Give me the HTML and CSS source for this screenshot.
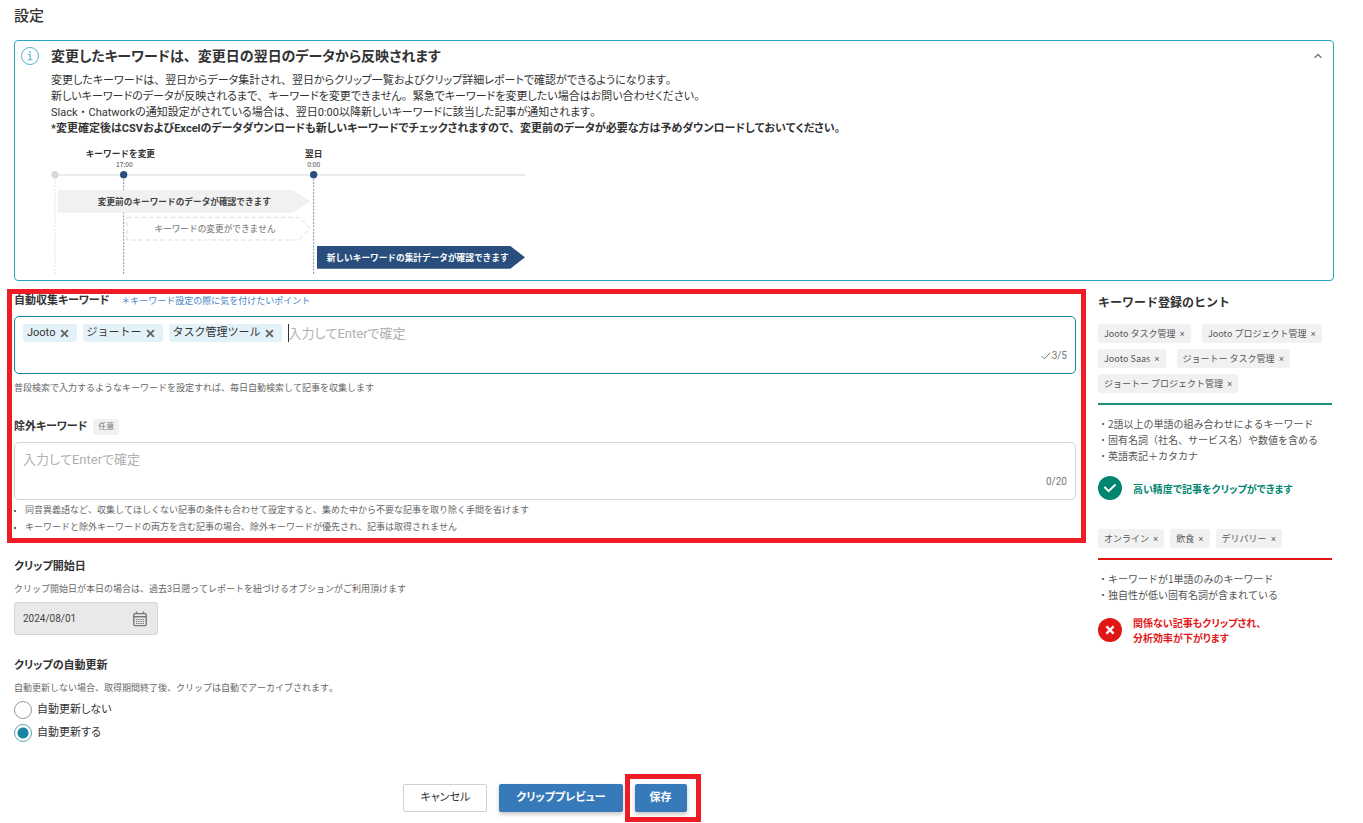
FILE: index.html
```
<!DOCTYPE html>
<html lang="ja">
<head>
    <meta charset="UTF-8">
    <meta name="viewport" content="width=device-width, initial-scale=1.0">
    <title>設定</title>
    <link rel="stylesheet" href="styles.css">
</head>
<body>
    <h1 class="page-title">設定</h1>

    <section class="notice">
        <svg class="notice-icon" viewBox="0 0 18 18" fill="none" stroke="#4db3cd">
            <circle cx="9" cy="9" r="8.5"/>
            <path d="M7 7.5h2.2v5M6.8 12.8h4.6" stroke-width="1.1"/>
            <circle cx="9" cy="5.2" r=".9" fill="#4db3cd" stroke="none"/>
        </svg>
        <div class="notice-body">
            <h2>変更したキーワードは<span class="full">、</span>変更日の翌日のデータから反映されます</h2>
            <p>変更したキーワードは<span class="full">、</span>翌日からデータ集計され<span class="full">、</span>翌日からクリップ一覧およびクリップ詳細レポートで確認ができるようになります<span class="full">。</span></p>
            <p>新しいキーワードのデータが反映されるまで<span class="full">、</span>キーワードを変更できません<span class="full">。</span>緊急でキーワードを変更したい場合はお問い合わせください<span class="full">。</span></p>
            <p>Slack<span class="full">・</span>Chatworkの通知設定がされている場合は<span class="full">、</span>翌日0:00以降新しいキーワードに該当した記事が通知されます<span class="full">。</span></p>
            <p><strong>*変更確定後はCSVおよびExcelのデータダウンロードも新しいキーワードでチェックされますので<span class="full">、</span>変更前のデータが必要な方は予めダウンロードしておいてください<span class="full">。</span></strong></p>
            <svg class="timeline" viewBox="16 0 714 201">
                <path d="M22 52.5H727" stroke="#e4e4e4" stroke-width="2"/>
                <path d="M22 58V201" stroke="#e2e2e2" stroke-width="1.5" stroke-dasharray="3 2"/>
                <path d="M125 58V201M410 58V201" stroke="#7d92b3" stroke-width="1.5" stroke-dasharray="3 2"/>
                <circle cx="22" cy="52" r="5.5" fill="#d9d9d9"/>
                <circle cx="125" cy="52" r="5.5" fill="#294d7c"/>
                <circle cx="410" cy="52" r="5.5" fill="#294d7c"/>
                <path d="M26 75H379L405 92L379 109H26Z" fill="#f1f1f1"/>
                <path d="M130 116H388L404 133L388 150H130Z" fill="#fff" stroke="#dcdcdc" stroke-width="1.5" stroke-dasharray="7 4"/>
                <path d="M415 159H705L727 176L705 193H415Z" fill="#294d7c"/>
                <g font-size="13" font-weight="bold" text-anchor="middle">
                    <text x="120" y="25" fill="#333">キーワードを変更</text>
                    <text x="410" y="25" fill="#333">翌日</text>
                    <text x="216" y="97" fill="#444">変更前のキーワードのデータが確認できます</text>
                    <text x="262" y="138" fill="#888" font-weight="500">キーワードの変更ができません</text>
                    <text x="566" y="181" fill="#fff">新しいキーワードの集計データが確認できます</text>
                </g>
                <g font-size="10" text-anchor="middle" fill="#444">
                    <text x="126" y="40">17:00</text>
                    <text x="410" y="40">0:00</text>
                </g>
            </svg>
        </div>
        <button type="button" class="notice-toggle" aria-label="閉じる">
            <svg viewBox="0 0 8 6" fill="none" stroke="#777" stroke-width="1.4"><path d="M.6 4.8L4 1.4L7.4 4.8"/></svg>
        </button>
    </section>

    <div class="columns">
        <form class="settings">
            <div class="keywords">
                <div class="field">
                    <div class="field-title">
                        <label for="keyword">自動収集キーワード</label>
                        <a href="#">＊キーワード設定の際に気を付けたいポイント</a>
                    </div>
                    <div class="tag-box active">
                        <div class="tags">
                            <span class="tag">Jooto<button type="button" aria-label="削除"><svg viewBox="0 0 8 8"><path d="M1 1l6 6M7 1l-6 6"/></svg></button></span>
                            <span class="tag">ジョートー<button type="button" aria-label="削除"><svg viewBox="0 0 8 8"><path d="M1 1l6 6M7 1l-6 6"/></svg></button></span>
                            <span class="tag">タスク管理ツール<button type="button" aria-label="削除"><svg viewBox="0 0 8 8"><path d="M1 1l6 6M7 1l-6 6"/></svg></button></span>
                            <input type="text" id="keyword" placeholder="入力してEnterで確定">
                        </div>
                        <div class="counter"><svg viewBox="0 0 10 8" fill="none" stroke="#777"><path d="M.8 4.2L3.4 6.8L9.2 .8"/></svg>3/5</div>
                    </div>
                    <p class="help">普段検索で入力するようなキーワードを設定すれば、毎日自動検索して記事を収集します</p>
                </div>
                <div class="field">
                    <div class="field-title">
                        <label for="exclude">除外キーワード</label>
                        <span class="optional">任意</span>
                    </div>
                    <div class="tag-box">
                        <div class="tags">
                            <input type="text" id="exclude" placeholder="入力してEnterで確定">
                        </div>
                        <div class="counter">0/20</div>
                    </div>
                    <ul class="help-list">
                        <li>同音異義語など、収集してほしくない記事の条件も合わせて設定すると、集めた中から不要な記事を取り除く手間を省けます</li>
                        <li>キーワードと除外キーワードの両方を含む記事の場合、除外キーワードが優先され、記事は取得されません</li>
                    </ul>
                </div>
                <div class="marker marker-keywords"></div>
            </div>

            <div class="field">
                <div class="field-title"><label for="start">クリップ開始日</label></div>
                <p class="help">クリップ開始日が本日の場合は、過去3日遡ってレポートを紐づけるオプションがご利用頂けます</p>
                <div class="date-box">
                    <input type="text" id="start" value="2024/08/01" disabled>
                    <svg viewBox="0 0 14 16" fill="none" stroke="#777">
                        <rect x=".8" y="2.6" width="12.4" height="12" rx="1" stroke-width="1.4"/>
                        <path d="M.8 5.8h12.4M3.5 .5v2M10.5 .5v2" stroke-width="1.4"/>
                        <path d="M3 8.5h8M3 10.5h8M3 12.5h8" stroke-width="1.2" stroke-dasharray="1.4 .8"/>
                    </svg>
                </div>
            </div>

            <div class="field">
                <div class="field-title">クリップの自動更新</div>
                <p class="help">自動更新しない場合、取得期間終了後、クリップは自動でアーカイブされます。</p>
                <div class="radios">
                    <label><input type="radio" name="renew">自動更新しない</label>
                    <label><input type="radio" name="renew" checked>自動更新する</label>
                </div>
            </div>

            <div class="actions">
                <button type="button" class="btn">キャンセル</button>
                <button type="button" class="btn btn-primary">クリッププレビュー</button>
                <div class="save">
                    <button type="submit" class="btn btn-primary">保存</button>
                    <div class="marker marker-save"></div>
                </div>
            </div>
        </form>

        <aside class="hints">
            <h2>キーワード登録のヒント</h2>
            <div class="chips good">
                <span class="chip">Jooto タスク管理 <i>×</i></span>
                <span class="chip">Jooto プロジェクト管理 <i>×</i></span>
                <span class="chip">Jooto Saas <i>×</i></span>
                <span class="chip">ジョートー タスク管理 <i>×</i></span>
                <span class="chip">ジョートー プロジェクト管理 <i>×</i></span>
            </div>
            <ul class="points">
                <li>・2語以上の単語の組み合わせによるキーワード</li>
                <li>・固有名詞（社名、サービス名）や数値を含める</li>
                <li>・英語表記＋カタカナ</li>
            </ul>
            <div class="result result-good">
                <svg viewBox="0 0 24 24" fill="none" stroke="#fff" stroke-width="2">
                    <circle cx="12" cy="12" r="12" fill="#00856f" stroke="none"/>
                    <path d="M7 11.5l3.6 3.6L17 9" stroke-linecap="round"/>
                </svg>
                <p>高い精度で記事をクリップができます</p>
            </div>

            <div class="chips bad">
                <span class="chip">オンライン <i>×</i></span>
                <span class="chip">飲食 <i>×</i></span>
                <span class="chip">デリバリー <i>×</i></span>
            </div>
            <ul class="points points-bad">
                <li>・キーワードが1単語のみのキーワード</li>
                <li>・独自性が低い固有名詞が含まれている</li>
            </ul>
            <div class="result result-bad">
                <svg viewBox="0 0 24 24" fill="none" stroke="#fff" stroke-width="2.2">
                    <circle cx="12" cy="12" r="12" fill="#e01717" stroke="none"/>
                    <path d="M8.4 8.4l7.2 7.2M15.6 8.4l-7.2 7.2"/>
                </svg>
                <p>関係ない記事もクリップされ、<br>分析効率が下がります</p>
            </div>
        </aside>
    </div>
</body>
</html>
```
FILE: styles.css
```
* {
    margin: 0;
    padding: 0;
    box-sizing: border-box;
}
body {
    padding: 4px 29px 11px 14px;
    background: #fff;
    color: #333;
    font-family: Roboto, "Noto Sans CJK JP", sans-serif;
    font-size: 11px;
    line-height: 16px;
    font-feature-settings: "palt";
    font-kerning: none;
}
button, input {
    font: inherit;
    font-feature-settings: inherit;
    color: inherit;
}
button {
    cursor: pointer;
}
svg {
    display: block;
    flex-shrink: 0;
}
ul {
    list-style: none;
}
/* full-width punctuation */
.full {
    font-feature-settings: normal;
}
.page-title {
    font-size: 15px;
    line-height: 24px;
    font-weight: 500;
}
.notice {
    display: flex;
    margin-top: 12px;
    padding: 3px 11px 6px 6px;
    border: 1px solid #2aa3c1;
    border-radius: 4px;
}
.notice-icon {
    width: 18px;
    height: 18px;
    margin-top: 3px;
}
.notice-body {
    flex: 1;
    margin-left: 12px;
}
.notice-body h2 {
    margin-bottom: 5px;
    font-size: 14px;
    line-height: 24px;
    font-weight: bold;
}
.timeline {
    width: 476px;
    margin-top: 3px;
    font-family: "Noto Sans CJK JP", sans-serif;
    font-feature-settings: normal;
}
.notice-toggle {
    align-self: flex-start;
    margin-top: 9px;
    border: none;
    background: none;
}
.notice-toggle svg {
    width: 8px;
    height: 6px;
}
.columns {
    display: grid;
    grid-template-columns: 1fr 236px;
    gap: 22px;
    margin-top: 12px;
}
.keywords {
    position: relative;
}
.field {
    margin-bottom: 23px;
}
.field-title {
    display: flex;
    align-items: center;
    height: 16px;
    font-weight: bold;
}
.field-title a {
    margin-left: 12px;
    color: #4a86c5;
    font-size: 9px;
    font-weight: normal;
    font-feature-settings: normal;
    text-decoration: none;
}
.optional {
    margin-left: 6px;
    padding: 0 5px;
    background: #f1f1f1;
    border-radius: 2px;
    color: #777;
    font-size: 8px;
    font-weight: normal;
}
.tag-box {
    margin-top: 7px;
    padding: 7px 8px 9px;
    border: 1px solid #d4d4d4;
    border-radius: 5px;
}
.tag-box.active {
    border-color: #1785a3;
}
.tags {
    display: flex;
    gap: 6px;
}
.tag {
    display: flex;
    align-items: center;
    gap: 4px;
    height: 18px;
    padding: 0 8px 0 4px;
    background: #e3f1f9;
    border-radius: 3px;
    font-feature-settings: normal;
}
.tag button {
    border: none;
    background: none;
}
.tag svg {
    width: 9px;
    height: 9px;
    fill: none;
    stroke: #666;
    stroke-width: 1.7;
}
.tags input {
    flex: 1;
    min-width: 0;
    height: 18px;
    border: none;
    outline: none;
    font-size: 13px;
}
.active .tags input {
    border-left: 1px solid #333;
}
.tags input::placeholder {
    color: #b0b0b0;
}
.counter {
    display: flex;
    justify-content: flex-end;
    align-items: center;
    gap: 1px;
    margin-top: 6px;
    color: #777;
    font-size: 10px;
}
.counter svg {
    width: 10px;
    height: 8px;
}
.help {
    margin-top: 6px;
    color: #666;
    font-size: 9px;
    font-feature-settings: normal;
}
.help-list {
    margin-top: 2px;
    color: #666;
    font-size: 9px;
    line-height: 17px;
    font-feature-settings: normal;
}
.help-list li {
    display: flex;
    align-items: center;
}
.help-list li::before {
    content: "";
    width: 2px;
    height: 2px;
    margin-right: 9px;
    background: #666;
}
.date-box {
    display: flex;
    align-items: center;
    width: 144px;
    height: 33px;
    margin-top: 5px;
    padding: 0 10px 0 8px;
    border: 1px solid #d4d4d4;
    border-radius: 3px;
    background: #e9e9e9;
}
.date-box input {
    flex: 1;
    min-width: 0;
    border: none;
    background: none;
    color: #444;
    font-size: 10px;
}
.date-box svg {
    width: 14px;
    height: 16px;
}
.radios {
    margin-top: 2px;
}
.radios label {
    display: flex;
    align-items: center;
    gap: 5px;
    height: 23px;
}
.radios input {
    appearance: none;
    width: 18px;
    height: 18px;
    border: 1px solid #999;
    border-radius: 50%;
    background: #fff;
}
.radios input:checked {
    border-color: #5fa3b5;
    background: radial-gradient(circle, #1785a3 5px, #fff 6px);
}
.actions {
    display: flex;
    justify-content: center;
    gap: 12px;
    margin-top: 40px;
}
.btn {
    height: 28px;
    padding: 0 16px;
    border: 1px solid #d0d0d0;
    border-radius: 2px;
    background: #fff;
}
.btn-primary {
    border-color: #377ab9;
    background: #377ab9;
    color: #fff;
    font-weight: bold;
    box-shadow: 0 2px 4px rgba(0, 0, 0, 0.25);
}
.save {
    position: relative;
}
.save .btn {
    padding: 0 14px;
}
/* red frames drawn over the form */
.marker {
    position: absolute;
    border: 5px solid #ee1c25;
    pointer-events: none;
}
.marker-keywords {
    inset: -4px -10px -7px -7px;
}
.marker-save {
    inset: -10px -14px -10px -10px;
}
.hints {
    padding: 1px 2px 0 0;
    font-family: "Noto Sans CJK JP", sans-serif;
    font-feature-settings: normal;
}
.hints h2 {
    font-size: 12px;
    line-height: 16px;
    font-weight: bold;
}
.chips {
    display: flex;
    flex-wrap: wrap;
    gap: 6px 11px;
    padding-bottom: 10px;
    border-bottom: 2px solid #1c9079;
}
.good {
    margin-top: 14px;
}
.bad {
    gap: 6px;
    margin-top: 29px;
    border-color: #e01717;
}
.chip {
    height: 19px;
    padding: 0 6px;
    border-radius: 3px;
    background: #f1f1f1;
    color: #555;
    font-size: 9px;
    line-height: 19px;
}
.chip i {
    margin-left: 2px;
    font-family: "Liberation Sans", sans-serif;
    font-style: normal;
}
.points {
    margin-top: 11px;
    color: #555;
    font-size: 10px;
    line-height: 16px;
}
.result {
    display: flex;
    align-items: center;
    gap: 11px;
    margin-top: 12px;
    font-size: 10px;
    line-height: 15px;
    font-weight: bold;
    font-feature-settings: "palt";
}
.result svg {
    width: 24px;
    height: 24px;
}
.result-good {
    color: #00856f;
}
.result-bad {
    color: #e01717;
}
```
